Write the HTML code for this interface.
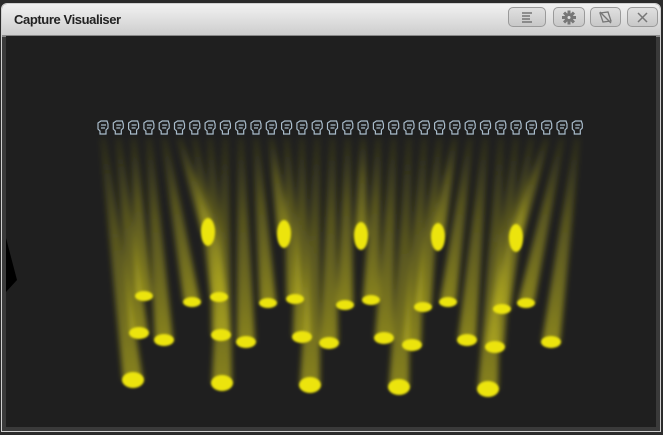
<!DOCTYPE html>
<html><head><meta charset="utf-8"><style>
html,body{margin:0;padding:0;width:663px;height:435px;background:#2b2b2b;overflow:hidden;font-family:"Liberation Sans",sans-serif}
.win{position:absolute;left:1px;top:3px;width:660px;height:429px;border-radius:6px 6px 0 0;background:#3a3a3a;border:1px solid #cfcfcf;box-sizing:border-box}
.title{position:absolute;left:0;top:0;right:0;height:31px;background:linear-gradient(#f2f2f2,#cdcdcd);border-radius:5px 5px 0 0;border-bottom:2px solid #888}
.title span{position:absolute;left:12px;top:8px;font-size:13px;font-weight:bold;color:#222;letter-spacing:-0.4px}
.btn{position:absolute;top:3px;height:20px;border:1px solid #9a9a9a;border-radius:5px;background:linear-gradient(#e0e0e0,#c8c8c8);box-sizing:border-box}
.view{position:absolute;left:6px;top:36px;width:650px;height:391px;background:#1f1f1f}
</style></head><body>
<div class="win">
<div class="title"><span>Capture Visualiser</span>
<div class="btn" style="left:506px;width:38px"><svg width="36" height="18"><g stroke="#666" stroke-width="1.3"><line x1="13" y1="5" x2="23" y2="5"/><line x1="13" y1="8" x2="21" y2="8"/><line x1="13" y1="11" x2="21" y2="11"/><line x1="13" y1="14" x2="23" y2="14"/></g></svg></div>
<div class="btn" style="left:551px;width:32px"><svg width="30" height="18"><g fill="#777"><circle cx="15" cy="9.5" r="4.5"/><rect x="13.5" y="2.5" width="3" height="14"/><rect x="8" y="8" width="14" height="3"/><rect x="13.5" y="2.5" width="3" height="14" transform="rotate(45 15 9.5)"/><rect x="13.5" y="2.5" width="3" height="14" transform="rotate(-45 15 9.5)"/></g><circle cx="15" cy="9.5" r="1.5" fill="#ddd"/></svg></div>
<div class="btn" style="left:588px;width:31px"><svg width="29" height="18"><g fill="none" stroke="#777" stroke-width="1.3"><path d="M9 5 L17 4 L20 13 L12 14 Z"/><path d="M9 4 L20 15"/></g></svg></div>
<div class="btn" style="left:625px;width:31px"><svg width="29" height="18"><g stroke="#777" stroke-width="1.5"><line x1="10" y1="5" x2="19" y2="14"/><line x1="19" y1="5" x2="10" y2="14"/></g></svg></div>
</div>
</div>
<div class="view">
<svg width="650" height="391" viewBox="6 36 650 391" style="position:absolute;left:0;top:0">
<defs>
<filter id="b" x="-80%" y="-10%" width="260%" height="120%"><feGaussianBlur stdDeviation="3"/></filter>
<filter id="s" x="-50%" y="-50%" width="200%" height="200%"><feGaussianBlur stdDeviation="1"/></filter>
<linearGradient id="g" x1="0" y1="0" x2="0" y2="1"><stop offset="0" stop-color="#8a8a18" stop-opacity="0.1"/><stop offset="0.4" stop-color="#a8a220" stop-opacity="0.4"/><stop offset="1" stop-color="#c0b820" stop-opacity="0.65"/></linearGradient>
</defs>
<path d="M6 238 L17 280 L6 292 Z" fill="#000"/>
<g filter="url(#b)" id="beams"></g>
<g filter="url(#s)" fill="#ece410" id="spots"></g>
<g id="heads" fill="none" stroke="#a9bccb" stroke-width="1.2"></g>
</svg>
</div>
<script>
var sp=[[133,380,11,8],[139,333,10,6],[144,296,9,5],[164,340,10,6],[192,302,9,5],[208,232,7,14],[219,297,9,5],[221,335,10,6],[222,383,11,8],[246,342,10,6],[268,303,9,5],[284,234,7,14],[295,299,9,5],[302,337,10,6],[310,385,11,8],[329,343,10,6],[345,305,9,5],[361,236,7,14],[371,300,9,5],[384,338,10,6],[399,387,11,8],[412,345,10,6],[423,307,9,5],[438,237,7,14],[448,302,9,5],[467,340,10,6],[488,389,11,8],[495,347,10,6],[502,309,9,5],[516,238,7,14],[526,303,9,5],[551,342,10,6]];
var ns="http://www.w3.org/2000/svg",B=document.getElementById('beams'),S=document.getElementById('spots'),H=document.getElementById('heads');
sp.forEach(function(p,i){
 var fx=103+i*15.3;
 var l=document.createElementNS(ns,'path');
 var w=p[2]*0.9;
 l.setAttribute('d','M'+(fx-3)+' 138 L'+(fx+3)+' 138 L'+(p[0]+w)+' '+p[1]+' L'+(p[0]-w)+' '+p[1]+' Z');
 l.setAttribute('fill','url(#g)');B.appendChild(l);
 var e=document.createElementNS(ns,'ellipse');
 e.setAttribute('cx',p[0]);e.setAttribute('cy',p[1]);e.setAttribute('rx',p[2]);e.setAttribute('ry',p[3]);S.appendChild(e);
 var h=document.createElementNS(ns,'path');var x=fx-5,y=121;
 h.setAttribute('d','M'+x+' '+(y+2)+' l3 -2 h6 l1 3 v4 l-2 2 v4 h-6 v-3 l-2 -2 z M'+(x+3)+' '+(y+4)+' h5 M'+(x+3)+' '+(y+7)+' h4');
 H.appendChild(h);
});
</script>
</body></html>
